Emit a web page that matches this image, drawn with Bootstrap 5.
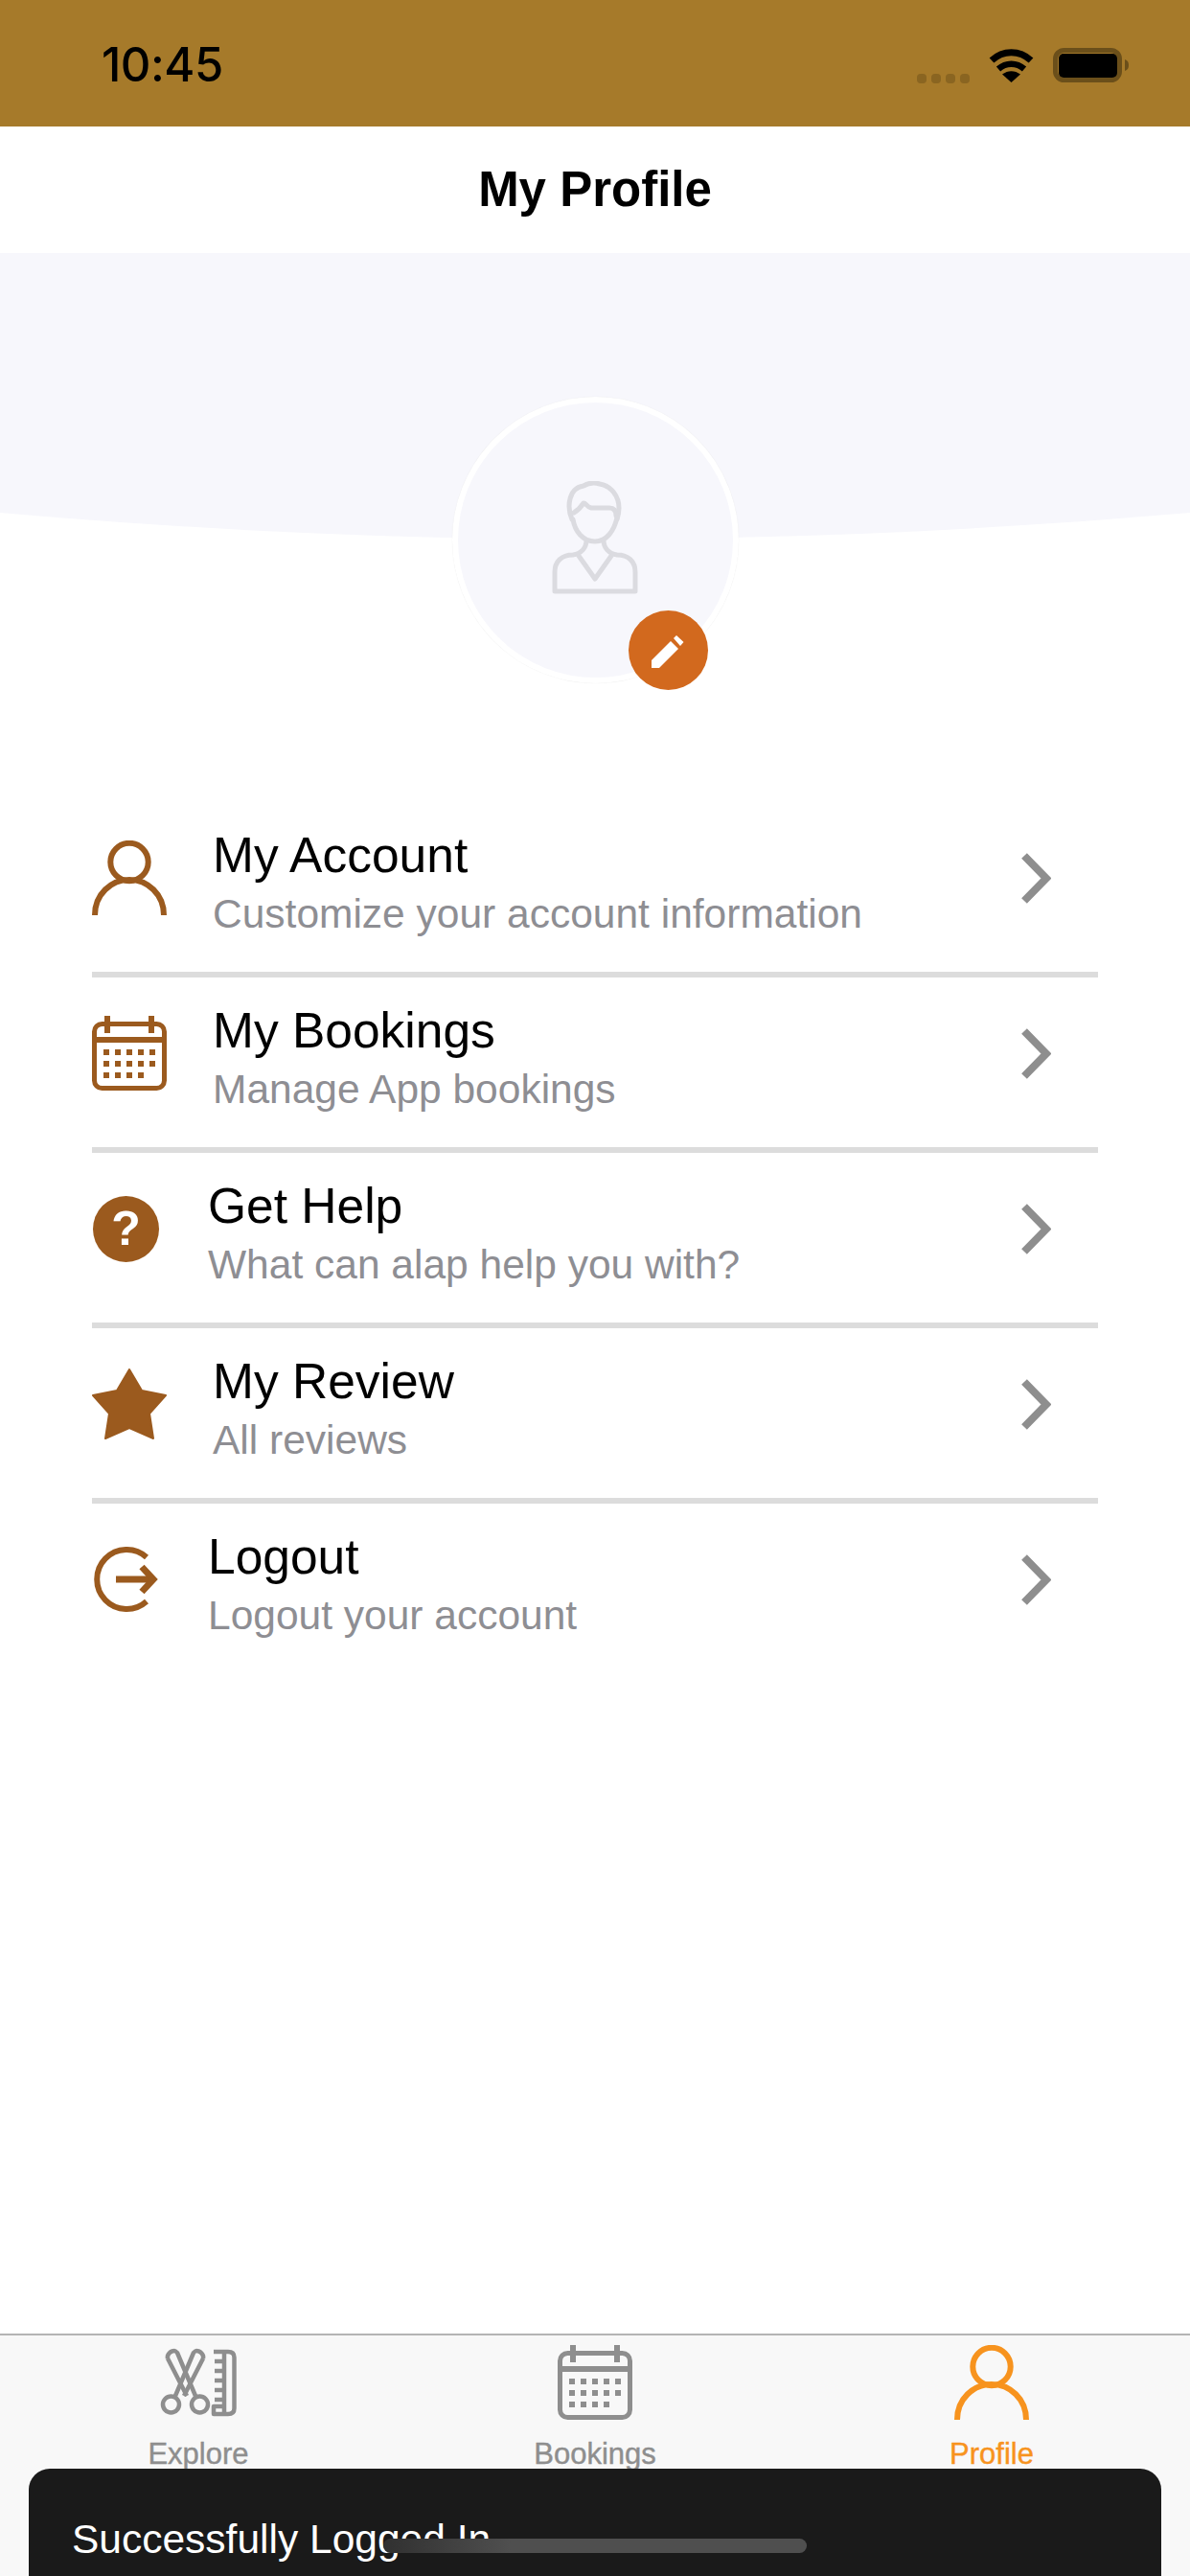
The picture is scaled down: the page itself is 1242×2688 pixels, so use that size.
<!DOCTYPE html>
<html lang="en">
<head>
    <meta charset="UTF-8">
    <title>My Profile</title>
    <meta name="viewport" content="width=device-width, initial-scale=1">
    <link href="https://cdn.jsdelivr.net/npm/bootstrap@5.3.3/dist/css/bootstrap.min.css" rel="stylesheet">
    <style>
        body { background: #fff; font-family: "Liberation Sans", Arial, sans-serif; color: #000; }
        .status-area { height: 132px; background: #a67a2a; padding: 0 64px 0 106px; }
        .clock { font-family: Inter, "Liberation Sans", sans-serif; font-weight: 500; font-size: 49px; letter-spacing: -0.5px; line-height: 1; margin-top: 3px; }
        .signal-dots { gap: 5px; margin: 31px 20px 0 0; }
        .signal-dots span { width: 10px; height: 10px; border-radius: 4px; background: #8a6521; }
        .wifi-mark { margin-right: 20px; }
        .top-title { height: 132px; font-size: 51px; font-weight: 700; margin: 0; }
        .hero-shape { display: block; }
        .avatar-ring { width: 299px; height: 299px; margin-top: -149px; background: #f7f7fc; border: 6px solid #fff; box-shadow: 0 0 1px #e6e6e6; }
        .avatar-figure { margin-bottom: 5px; }
        .edit-dot { width: 83px; height: 83px; background: #d2691e; right: 26px; bottom: -13px; }
        .menu-list { margin: 124px 96px 0; padding: 0; list-style: none; }
        .menu-row { height: 183px; padding-bottom: 19px; border-bottom: 6px solid #dcdcdc; }
        .menu-row:last-child { border-bottom: 0; height: 177px; }
        .menu-text { margin-left: 48px; padding-top: 10px; }
        .menu-title { font-size: 51.5px; line-height: 58px; }
        .menu-sub { font-size: 42.5px; line-height: 50px; color: #8e8e93; margin-top: 7.5px; }
        .menu-go { margin-right: 49px; }
        .brown { color: #9b5a1e; }
        .help-dot { width: 69px; height: 69px; margin: 0 3px 0 1px; background: #9b5a1e; color: #fff; font-size: 50px; font-weight: 700; line-height: 1; }
        .tab-strip { background: #f8f8f8; border-top: 2px solid #b4b4b4; height: 253px; color: #8e8e8e; }
        .tab-icon { height: 78px; margin-top: 10px; }
        .tab-name { font-size: 31px; line-height: 36px; margin-top: 18px; -webkit-text-stroke: 0.4px currentColor; }
        .tab-on { color: #f7931e; }
        .toast-box { left: 30px; right: 30px; bottom: 0; height: 112px; background: #1a1a1a; border-radius: 22px 22px 0 0; color: #fff; font-size: 42.5px; padding: 42px 0 0 45px; }
        .home-bar { left: 400px; bottom: 24px; width: 442px; height: 15px; border-radius: 8px; background: linear-gradient(90deg, #303030, #4f4f4f 30%); }
    </style>
</head>
<body>
<svg width="0" height="0" class="position-absolute">
    <symbol id="ic-person" viewBox="0 0 78 78">
        <circle cx="39" cy="22.5" r="19.700" fill="none" stroke="currentColor" stroke-width="6"/>
        <path d="M3 78C3 56 20 41 39 41s36 15 36 37" fill="none" stroke="currentColor" stroke-width="6"/>
    </symbol>
    <symbol id="ic-calendar" viewBox="0 0 78 78">
        <rect x="2.500" y="8.500" width="73" height="67" rx="8" fill="none" stroke="currentColor" stroke-width="5"/>
        <path d="M13 0h6v18h-6zM59 0h6v18h-6zM2 22h74v6H2z" fill="currentColor"/>
        <path d="M12 35h6v6h-6zM24 35h6v6h-6zM36 35h6v6h-6zM48 35h6v6h-6zM60 35h6v6h-6zM12 47h6v6h-6zM24 47h6v6h-6zM36 47h6v6h-6zM48 47h6v6h-6zM60 47h6v6h-6zM12 59h6v6h-6zM24 59h6v6h-6zM36 59h6v6h-6zM48 59h6v6h-6z" fill="currentColor"/>
    </symbol>
    <symbol id="ic-chevron" viewBox="0 0 31 53">
        <path d="M3 3l23 23.500L3 50" fill="none" stroke="#8e8e8e" stroke-width="8"/>
    </symbol>
</svg>

<div class="position-relative overflow-hidden vh-100 d-flex flex-column">
    <!-- status bar -->
    <div class="status-area d-flex align-items-center justify-content-between flex-shrink-0">
        <div class="clock">10:45</div>
        <div class="d-flex align-items-center">
            <div class="signal-dots d-flex"><span></span><span></span><span></span><span></span></div>
            <svg width="47" height="36" viewBox="0 0 47 36" class="wifi-mark mt-1">
                <path d="M3 13C15 2 32 2 44 13" fill="none" stroke="#000" stroke-width="7"/>
                <path d="M10 22C18 15 29 15 37 22" fill="none" stroke="#000" stroke-width="6.500"/>
                <path d="M23.500 36L14 27.500C20 23 27 23 33 27.500Z"/>
            </svg>
            <svg width="79" height="36" viewBox="0 0 79 36" class="mt-1">
                <rect x="2.500" y="2.500" width="67" height="31" rx="9" fill="none" stroke="#6b4f1a" stroke-width="5"/>
                <rect x="6" y="6" width="61" height="25" rx="5"/>
                <path d="M75 12c3 1 4 3 4 6s-1 5-4 6z" fill="#6b4f1a"/>
            </svg>
        </div>
    </div>

    <h1 class="top-title d-flex align-items-center justify-content-center flex-shrink-0">My Profile</h1>

    <main class="flex-grow-1">
        <svg class="hero-shape" width="1242" height="299" viewBox="0 0 1242 299">
            <path d="M0 0H1242V271Q621 326 0 271Z" fill="#f7f7fc"/>
        </svg>

        <div class="avatar-ring rounded-circle position-relative mx-auto d-flex align-items-center justify-content-center">
            <svg class="avatar-figure" width="90" height="118" viewBox="0 0 90 118" fill="none" stroke="#dbdbe0" stroke-width="5" stroke-linejoin="round" stroke-linecap="round">
                <path d="M21 40C15 26 18 7 33 5C38 2 45 1.500 50 3C62 5 70 16 70 28C70 33 69 37 68 40"/>
                <path d="M23 33C28 30 31 26 33 23C35 22 36 27 41 28H60C65 28 67 31 67 36"/>
                <path d="M22 40C24 52 32 63 45 63C57 63 65 52 68 38"/>
                <path d="M36 62C36 70 30 76 22 77C10 77 3 84 3 95V115H87V95C87 84 80 77 68 77C60 76 54 70 54 62"/>
                <path d="M28 78L45 102L62 78"/>
            </svg>
            <div class="edit-dot rounded-circle position-absolute">
                <svg width="83" height="83" viewBox="0 0 83 83" fill="#fff">
                    <path d="M24 52L44 32L52 40L32 60H24Z"/>
                    <path d="M47 29L50 26L57.500 33L54 37Z"/>
                </svg>
            </div>
        </div>

        <ul class="menu-list">
            <li class="menu-row d-flex align-items-center">
                <svg class="brown" width="78" height="78"><use href="#ic-person"/></svg>
                <div class="menu-text">
                    <div class="menu-title">My Account</div>
                    <div class="menu-sub">Customize your account information</div>
                </div>
                <svg class="ms-auto menu-go" width="31" height="53"><use href="#ic-chevron"/></svg>
            </li>
            <li class="menu-row d-flex align-items-center">
                <svg class="brown" width="78" height="78"><use href="#ic-calendar"/></svg>
                <div class="menu-text">
                    <div class="menu-title">My Bookings</div>
                    <div class="menu-sub">Manage App bookings</div>
                </div>
                <svg class="ms-auto menu-go" width="31" height="53"><use href="#ic-chevron"/></svg>
            </li>
            <li class="menu-row d-flex align-items-center">
                <div class="help-dot rounded-circle d-flex align-items-center justify-content-center">?</div>
                <div class="menu-text">
                    <div class="menu-title">Get Help</div>
                    <div class="menu-sub">What can alap help you with?</div>
                </div>
                <svg class="ms-auto menu-go" width="31" height="53"><use href="#ic-chevron"/></svg>
            </li>
            <li class="menu-row d-flex align-items-center">
                <svg class="brown" width="78" height="75" viewBox="0 0 78 75">
                    <path d="M39 1L52 23L77 28L60 47L64 73L39 62L14 73L18 47L1 28L26 23Z" fill="currentColor" stroke="currentColor" stroke-width="2" stroke-linejoin="round"/>
                </svg>
                <div class="menu-text">
                    <div class="menu-title">My Review</div>
                    <div class="menu-sub">All reviews</div>
                </div>
                <svg class="ms-auto menu-go" width="31" height="53"><use href="#ic-chevron"/></svg>
            </li>
            <li class="menu-row d-flex align-items-center">
                <svg class="brown" width="73" height="69" viewBox="-1 0 73 69" fill="none" stroke="currentColor">
                    <path d="M56 11A31 31 0 1 0 56 57" stroke-width="6"/>
                    <path d="M24 34H63" stroke-width="7"/>
                    <path d="M51 21L63 34L51 47" stroke-width="7"/>
                </svg>
                <div class="menu-text">
                    <div class="menu-title">Logout</div>
                    <div class="menu-sub">Logout your account</div>
                </div>
                <svg class="ms-auto menu-go" width="31" height="53"><use href="#ic-chevron"/></svg>
            </li>
        </ul>
    </main>

    <!-- tab bar -->
    <nav class="tab-strip row g-0 flex-shrink-0 text-center">
        <div class="col-4">
            <div class="tab-icon d-flex align-items-center justify-content-center">
                <svg width="80" height="72" viewBox="0 0 80 72" fill="none" stroke="currentColor" stroke-width="4.500" stroke-linejoin="round">
                    <circle cx="11.500" cy="59" r="8.500"/>
                    <circle cx="41.500" cy="59" r="8.500"/>
                    <path d="M8 11C7 7 11 3 15 3C16 3 17 4 18 5L37 50M8 11L28 50"/>
                    <path d="M45 11C46 7 42 3 38 3C37 3 36 4 35 5L16 50M45 11L25 50"/>
                    <path d="M56 4H71C75 4 77.500 6 77.500 10V63C77.500 67 75 69 71 69H56V61H67M67 4V69M57 14H67M57 24H67M57 34H67M57 44H67M57 54H67"/>
                </svg>
            </div>
            <div class="tab-name">Explore</div>
        </div>
        <div class="col-4">
            <div class="tab-icon d-flex align-items-center justify-content-center">
                <svg width="78" height="78"><use href="#ic-calendar"/></svg>
            </div>
            <div class="tab-name">Bookings</div>
        </div>
        <div class="col-4 tab-on">
            <div class="tab-icon d-flex align-items-center justify-content-center">
                <svg width="78" height="78"><use href="#ic-person"/></svg>
            </div>
            <div class="tab-name">Profile</div>
        </div>
    </nav>

    <div class="toast-box position-absolute">Successfully Logged In</div>
    <div class="home-bar position-absolute"></div>
</div>
<script src="https://cdn.jsdelivr.net/npm/bootstrap@5.3.3/dist/js/bootstrap.bundle.min.js"></script>
</body>
</html>
